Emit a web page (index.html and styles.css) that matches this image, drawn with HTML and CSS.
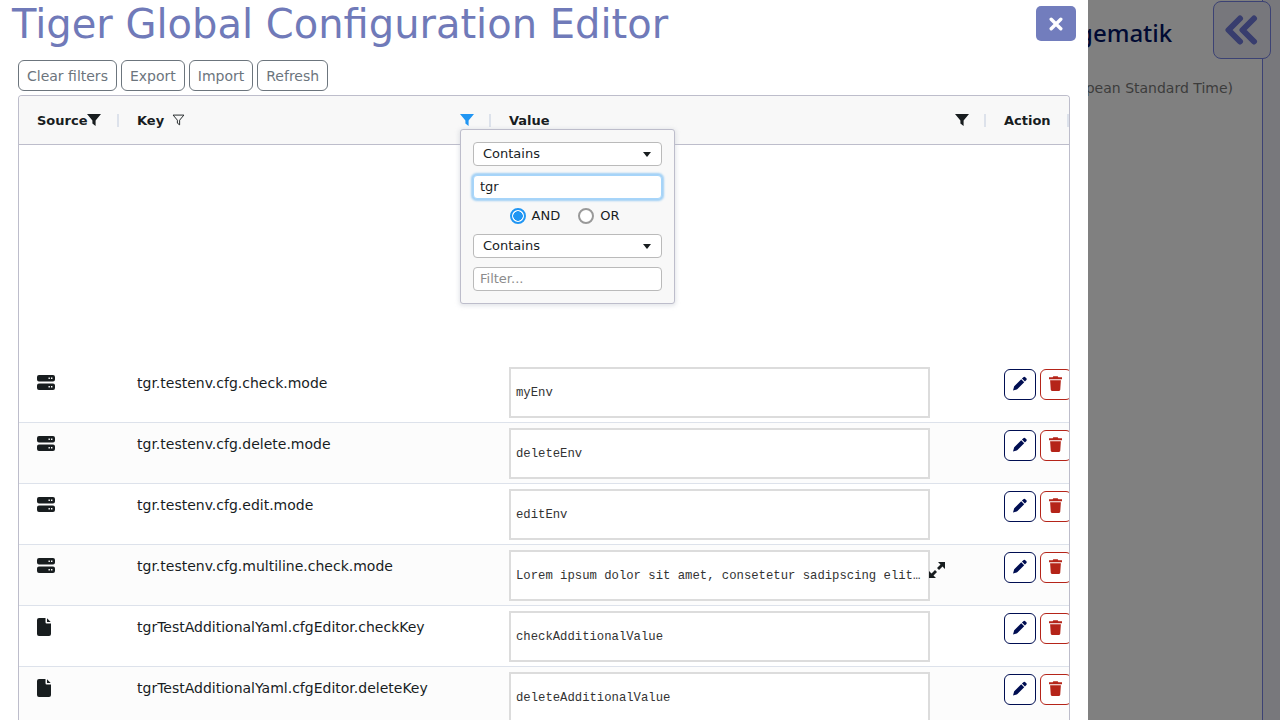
FILE: index.html
```html
<!DOCTYPE html>
<html lang="en">
<head>
<meta charset="utf-8">
<title>Tiger Global Configuration Editor</title>
<link rel="stylesheet" href="styles.css">
</head>
<body>
<div class="backdrop">
  <div class="brand">gematik</div>
  <div class="zone">(Central European Standard Time)</div>
  <div class="rail"></div>
  <button class="collapse" type="button" aria-label="Collapse">
    <svg viewBox="1 0 36 30" width="36" height="30"><path d="M17 3.500 5.500 15 17 26.500M31 3.500 19.500 15 31 26.500" fill="none" stroke="currentColor" stroke-width="6" stroke-linecap="round" stroke-linejoin="round"/></svg>
  </button>
</div>
<main class="modal">
  <header class="modal-head">
    <h1 class="title">Tiger Global Configuration Editor</h1>
    <button class="close" type="button" aria-label="Close">
      <svg viewBox="0 0 14 14" width="14" height="14"><path d="M2.200 2.200l9.600 9.600M11.800 2.200l-9.600 9.600" stroke="#fff" stroke-width="3.400" stroke-linecap="round"/></svg>
    </button>
  </header>
  <div class="toolbar">
    <button class="tool" type="button">Clear filters</button>
    <button class="tool" type="button">Export</button>
    <button class="tool" type="button">Import</button>
    <button class="tool" type="button">Refresh</button>
  </div>
  <section class="table">
    <div class="thead">
      <div class="th th-source">
        <span class="label">Source</span>
        <svg class="funnel solid" viewBox="0 0 14 12"><path d="M0 0h14L8.600 6.400V12L5.400 9.600V6.400z"/></svg>
        <i class="resizer"></i>
      </div>
      <div class="th th-key">
        <span class="label">Key</span>
        <svg class="funnel outline" viewBox="0 0 14 12"><path d="M1.200.7h11.600L8.200 6.200v5L5.800 9.400V6.200z"/></svg>
        <svg class="funnel solid active end" viewBox="0 0 14 12"><path d="M0 0h14L8.600 6.400V12L5.400 9.600V6.400z"/></svg>
        <i class="resizer"></i>
      </div>
      <div class="th th-value">
        <span class="label">Value</span>
        <svg class="funnel solid end" viewBox="0 0 14 12"><path d="M0 0h14L8.600 6.400V12L5.400 9.600V6.400z"/></svg>
        <i class="resizer"></i>
      </div>
      <div class="th th-action">
        <span class="label">Action</span>
        <i class="resizer"></i>
      </div>
    </div>
    <div class="spacer"></div>
    <div class="row">
      <div class="cell"><svg class="src" viewBox="0 .5 18 15"><use href="#server"/></svg></div>
      <div class="cell key">tgr.testenv.cfg.check.mode</div>
      <div class="cell"><div class="val">myEnv</div></div>
      <div class="cell actions"><button class="act edit" type="button"><svg viewBox="0 0 16 16"><use href="#pencil"/></svg></button><button class="act del" type="button"><svg viewBox="0 0 14 16"><use href="#trash"/></svg></button></div>
    </div>
    <div class="row alt">
      <div class="cell"><svg class="src" viewBox="0 .5 18 15"><use href="#server"/></svg></div>
      <div class="cell key">tgr.testenv.cfg.delete.mode</div>
      <div class="cell"><div class="val">deleteEnv</div></div>
      <div class="cell actions"><button class="act edit" type="button"><svg viewBox="0 0 16 16"><use href="#pencil"/></svg></button><button class="act del" type="button"><svg viewBox="0 0 14 16"><use href="#trash"/></svg></button></div>
    </div>
    <div class="row">
      <div class="cell"><svg class="src" viewBox="0 .5 18 15"><use href="#server"/></svg></div>
      <div class="cell key">tgr.testenv.cfg.edit.mode</div>
      <div class="cell"><div class="val">editEnv</div></div>
      <div class="cell actions"><button class="act edit" type="button"><svg viewBox="0 0 16 16"><use href="#pencil"/></svg></button><button class="act del" type="button"><svg viewBox="0 0 14 16"><use href="#trash"/></svg></button></div>
    </div>
    <div class="row alt">
      <div class="cell"><svg class="src" viewBox="0 .5 18 15"><use href="#server"/></svg></div>
      <div class="cell key">tgr.testenv.cfg.multiline.check.mode</div>
      <div class="cell value-wide"><div class="val">Lorem ipsum dolor sit amet, consetetur sadipscing elit…</div>
        <svg class="expand" viewBox="0 0 16 16"><path d="M9 0h7v7l-2.500-2.500L10 8 8 6l3.500-3.500zM7 16H0V9l2.500 2.500L6 8l2 2-3.500 3.500z"/></svg>
      </div>
      <div class="cell actions"><button class="act edit" type="button"><svg viewBox="0 0 16 16"><use href="#pencil"/></svg></button><button class="act del" type="button"><svg viewBox="0 0 14 16"><use href="#trash"/></svg></button></div>
    </div>
    <div class="row">
      <div class="cell"><svg class="src file" viewBox="0 0 14 18"><use href="#file"/></svg></div>
      <div class="cell key">tgrTestAdditionalYaml.cfgEditor.checkKey</div>
      <div class="cell"><div class="val">checkAdditionalValue</div></div>
      <div class="cell actions"><button class="act edit" type="button"><svg viewBox="0 0 16 16"><use href="#pencil"/></svg></button><button class="act del" type="button"><svg viewBox="0 0 14 16"><use href="#trash"/></svg></button></div>
    </div>
    <div class="row alt">
      <div class="cell"><svg class="src file" viewBox="0 0 14 18"><use href="#file"/></svg></div>
      <div class="cell key">tgrTestAdditionalYaml.cfgEditor.deleteKey</div>
      <div class="cell"><div class="val">deleteAdditionalValue</div></div>
      <div class="cell actions"><button class="act edit" type="button"><svg viewBox="0 0 16 16"><use href="#pencil"/></svg></button><button class="act del" type="button"><svg viewBox="0 0 14 16"><use href="#trash"/></svg></button></div>
    </div>
    <form class="popup">
      <div class="select"><span>Contains</span><i class="caret"></i></div>
      <input class="field focus" type="text" value="tgr">
      <div class="radios">
        <label class="radio"><i class="dot on"></i>AND</label>
        <label class="radio"><i class="dot"></i>OR</label>
      </div>
      <div class="select"><span>Contains</span><i class="caret"></i></div>
      <input class="field" type="text" placeholder="Filter...">
    </form>
  </section>
</main>
<svg class="defs" aria-hidden="true">
  <defs>
    <g id="server"><path fill-rule="evenodd" d="M2 .5h14a2 2 0 0 1 2 2V5a2 2 0 0 1-2 2H2a2 2 0 0 1-2-2V2.500a2 2 0 0 1 2-2zM11.500 3v1.400h1.400V3zm2.500 0v1.400h1.400V3zM2 9h14a2 2 0 0 1 2 2v2.500a2 2 0 0 1-2 2H2a2 2 0 0 1-2-2V11a2 2 0 0 1 2-2zm9.500 2.600V13h1.400v-1.400zm2.500 0V13h1.400v-1.400z"/></g>
    <path id="file" d="M2 0h6.500v4.300a1.200 1.200 0 0 0 1.200 1.200H14V16a2 2 0 0 1-2 2H2a2 2 0 0 1-2-2V2a2 2 0 0 1 2-2zM10 .3 13.700 4H10z"/>
    <path id="pencil" d="M11.600 1a1.900 1.900 0 0 1 2.700 0l.7.7a1.900 1.900 0 0 1 0 2.700L13.600 5.800 10.200 2.400zM9.400 3.200l3.400 3.400-7.700 7.700a2 2 0 0 1-.9.500L0 16l1.200-4.200a2 2 0 0 1 .5-.9z"/>
    <path id="trash" d="M4.600.2h4.800l.6 1.200H14v2.100H0V1.400h4zM1.200 4.600h11.600l-.7 10.200a1.300 1.300 0 0 1-1.300 1.200H3.200a1.300 1.300 0 0 1-1.300-1.200z"/>
  </defs>
</svg>
</body>
</html>
```
FILE: styles.css
```css
* { box-sizing: border-box; }
html, body { height: 100%; }
body {
  margin: 0;
  overflow: hidden;
  font-family: "DejaVu Sans", sans-serif;
  font-size: 14px;
  color: #212529;
  background: #808080;
}
.defs { position: absolute; width: 0; height: 0; }
.backdrop { position: absolute; inset: 0; background: #808080; }
.brand {
  position: absolute;
  left: 1078px;
  top: 18px;
  font: 500 24px/30px "Noto Sans", sans-serif;
  color: #000a33;
  white-space: nowrap;
}
.zone {
  position: absolute;
  right: 47px;
  top: 79px;
  font-size: 14px;
  line-height: 18px;
  color: #3c3c3c;
  white-space: nowrap;
}
.rail {
  position: absolute;
  left: 1262px;
  top: 0;
  bottom: 0;
  width: 18px;
  border-left: 1px solid #3c4274;
  background: #78787c;
}
.collapse {
  position: absolute;
  left: 1213px;
  top: 1px;
  width: 58px;
  height: 58px;
  padding: 0;
  border: 1px solid #3c4274;
  border-radius: 8px;
  background: #77777c;
  color: #383d6e;
  display: flex;
  align-items: center;
  justify-content: center;
}
.modal {
  position: relative;
  width: 1088px;
  height: 720px;
  background: #fff;
  display: flex;
  flex-direction: column;
  padding-left: 18px;
  overflow: hidden;
}
.modal-head {
  display: flex;
  justify-content: space-between;
  height: 60px;
  margin-left: -7px;
  padding-right: 12px;
}
.title {
  margin: 0 0 0 1px;
  font-size: 40px;
  font-weight: 400;
  line-height: 48px;
  color: #707ab9;
}
.close {
  margin-top: 6px;
  width: 40px;
  height: 35px;
  padding: 0;
  border: 0;
  border-radius: 5px;
  background: #727dbd;
  display: flex;
  align-items: center;
  justify-content: center;
}
.toolbar { display: flex; gap: 4px; height: 35px; align-items: flex-start; }
.tool {
  height: 31px;
  padding: 0 8px;
  border: 1px solid #6c757d;
  border-radius: 6px;
  background: #fff;
  color: #6c757d;
  font: 14px "DejaVu Sans", sans-serif;
}
.table {
  position: relative;
  width: 1052px;
  flex: 1;
  border: 1px solid #bdbdcb;
  border-bottom: 0;
  border-radius: 4px 4px 0 0;
  overflow: hidden;
}
.thead, .row {
  display: grid;
  grid-template-columns: 100px 372px 495px 1fr;
}
.thead {
  height: 49px;
  background: #f8f8f8;
  border-bottom: 1px solid #bdbdcb;
}
.th {
  position: relative;
  display: flex;
  align-items: center;
  padding-left: 18px;
  font-size: 13px;
  font-weight: 700;
  color: #181d1f;
}
.funnel { width: 14px; height: 12px; flex: none; }
.solid { fill: #181d1f; }
.outline { fill: none; stroke: #181d1f; stroke-width: 1; margin-left: 8px; width: 13px; }
.active { fill: #2196f3; }
.end { position: absolute; right: 17px; top: 18px; }
.resizer {
  position: absolute;
  right: 0;
  top: 18px;
  width: 2px;
  height: 13px;
  background: #dde2eb;
}
.spacer { height: 217px; }
.row {
  height: 61px;
  border-bottom: 1px solid #dde2eb;
  background: #fff;
}
.row.alt { background: #fcfcfc; }
.cell {
  padding: 5px 0 0 18px;
  line-height: 32px;
  min-width: 0;
  position: relative;
  white-space: nowrap;
}
.key { color: #181d1f; }
.src { display: block; width: 18px; height: 15px; margin-top: 8px; fill: #181d1f; }
.src.file { width: 14px; height: 18px; margin-top: 7px; }
.val {
  width: 421px;
  height: 51px;
  padding: 0 5px;
  border: 2px solid #dcdcdc;
  background: #fff;
  font: 12.25px/48px "Liberation Mono", monospace;
  color: #333;
  white-space: nowrap;
  overflow: hidden;
}
.expand { position: absolute; left: 438px; top: 17px; width: 16px; height: 16px; fill: #181d1f; }
.actions { display: flex; gap: 4px; padding-top: 7px; align-items: flex-start; }
.act {
  flex: none;
  width: 32px;
  height: 31px;
  padding: 0 0 2px;
  border: 1px solid;
  border-radius: 6px;
  background: #fff;
  display: flex;
  align-items: center;
  justify-content: center;
}
.act svg { width: 14px; height: 15px; }
.act.edit { border-color: #000e52; fill: #000e52; }
.act.del { border-color: #b52419; fill: #b52419; padding-right: 2px; }
.act.del svg { width: 13px; }
.popup {
  position: absolute;
  left: 441px;
  top: 33px;
  width: 215px;
  height: 175px;
  padding: 12px;
  background: #f8f8f8;
  border: 1px solid #bdbdcb;
  border-radius: 3px;
  box-shadow: 0 1px 4px 1px rgba(186, 191, 199, .4);
  display: flex;
  flex-direction: column;
  font-size: 13px;
  font-weight: 400;
}
.select, .field {
  flex: none;
  width: 100%;
  height: 24px;
  border: 1px solid #bababa;
  border-radius: 4px;
  background: #fff;
  color: #181d1f;
  font: 13px "DejaVu Sans", sans-serif;
}
.select {
  display: flex;
  align-items: center;
  justify-content: space-between;
  padding: 0 10px 2px 9px;
}
.caret {
  width: 0;
  height: 0;
  margin-top: 2px;
  border-left: 4.5px solid transparent;
  border-right: 4.5px solid transparent;
  border-top: 5px solid #181d1f;
}
.field { margin-top: 9px; padding: 0 6px 2px; outline: 0; }
.field::placeholder { color: #8c8c8c; opacity: 1; }
.field.focus { border-color: #a6d5fa; box-shadow: 0 0 2px .1rem rgba(33, 150, 243, .4); }
.radios {
  height: 35px;
  display: flex;
  align-items: center;
  justify-content: center;
  gap: 18px;
  padding: 0 6px 2px 0;
  color: #181d1f;
}
.radio { display: flex; align-items: center; gap: 6px; }
.dot {
  width: 16px;
  height: 16px;
  border: 2px solid #999;
  border-radius: 50%;
  background: #fff;
}
.dot.on { border-color: #2196f3; background: radial-gradient(circle, #2196f3 0 4.5px, #fff 5px); }
```
